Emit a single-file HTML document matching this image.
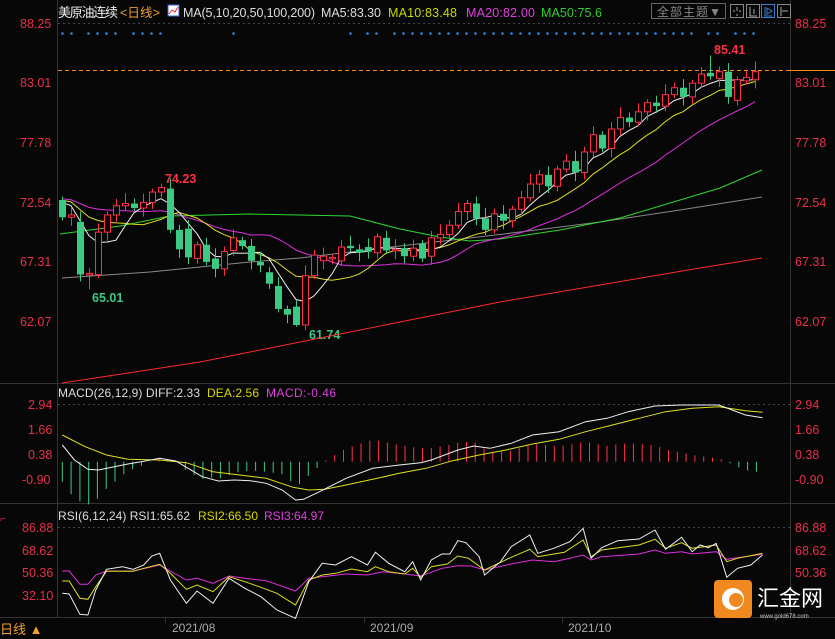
<!DOCTYPE html><html><head><meta charset="utf-8"><style>
body{margin:0;background:#070707;width:835px;height:639px;overflow:hidden;font-family:"Liberation Sans","Noto Sans CJK SC",sans-serif}
svg{position:absolute;left:0;top:0}
</style></head><body>
<svg id="s" width="835" height="639" xmlns="http://www.w3.org/2000/svg" font-family="Liberation Sans, Noto Sans CJK SC, sans-serif">
<rect width="835" height="639" fill="#070707"/>
<g stroke="#333" stroke-width="1">
<line x1="57.5" y1="0" x2="57.5" y2="617"/>
<line x1="790.5" y1="0" x2="790.5" y2="617"/>
<line x1="0" y1="383.5" x2="835" y2="383.5"/>
<line x1="0" y1="503.5" x2="835" y2="503.5"/>
<line x1="0" y1="617.5" x2="835" y2="617.5"/>
</g>
<g stroke="#444" stroke-dasharray="2,3"><line x1="58" y1="23.5" x2="790" y2="23.5"/><line x1="58" y1="404.5" x2="790" y2="404.5"/><line x1="58" y1="527.5" x2="790" y2="527.5"/></g>
<line x1="58" y1="70.5" x2="790" y2="70.5" stroke="#ff8c1a" stroke-dasharray="4,3"/>
<line x1="790" y1="70.5" x2="835" y2="70.5" stroke="#ff8c1a"/>
<g fill="#e8304a" font-size="12.5">
<text x="20" y="28">88.25</text><text x="20" y="87">83.01</text><text x="20" y="147">77.78</text><text x="20" y="207">72.54</text><text x="20" y="266">67.31</text><text x="20" y="326">62.07</text>
<text x="795" y="28">88.25</text><text x="795" y="87">83.01</text><text x="795" y="147">77.78</text><text x="795" y="207">72.54</text><text x="795" y="266">67.31</text><text x="795" y="326">62.07</text>
<text x="28" y="409">2.94</text><text x="28" y="434">1.66</text><text x="28" y="459">0.38</text><text x="22" y="484">-0.90</text>
<text x="795" y="409">2.94</text><text x="795" y="434">1.66</text><text x="795" y="459">0.38</text><text x="795" y="484">-0.90</text>
<text x="22" y="532">86.88</text><text x="22" y="555">68.62</text><text x="22" y="577">50.36</text><text x="22" y="600">32.10</text>
<text x="795" y="532">86.88</text><text x="795" y="555">68.62</text><text x="795" y="577">50.36</text>
</g>
<text x="58" y="17" fill="#eee" font-size="13" textLength="60">美原油连续</text>
<text x="120" y="17" fill="#f0a030" font-size="12.5" textLength="40">&lt;日线&gt;</text>
<rect x="168" y="5" width="11" height="11" fill="#fff" stroke="#36c"/><path d="M169 14l3-4 3 2 3-5" stroke="#e22" fill="none"/>
<text x="183" y="17" fill="#ddd" font-size="12.5" textLength="132">MA(5,10,20,50,100,200)</text>
<text x="321" y="17" fill="#ddd" font-size="12.5" textLength="60">MA5:83.30</text>
<text x="388" y="17" fill="#c8d800" font-size="12.5" textLength="69">MA10:83.48</text>
<text x="466" y="17" fill="#e040e0" font-size="12.5" textLength="69">MA20:82.00</text>
<text x="541" y="17" fill="#30d030" font-size="12.5" textLength="61">MA50:75.6</text>
<rect x="651.5" y="3.5" width="74" height="15" fill="none" stroke="#666"/>
<text x="657" y="16" fill="#888" font-size="12" textLength="64">全部主题▼</text>
<rect x="730.5" y="4.5" width="13" height="13" fill="none" stroke="#888"/>
<rect x="746.5" y="4.5" width="13" height="13" fill="none" stroke="#888"/>
<rect x="761.5" y="4.5" width="13" height="13" fill="none" stroke="#3a7fd5"/>
<rect x="777.5" y="4.5" width="13" height="13" fill="none" stroke="#888"/>
<path d="M737 7v4M737 14v2M733 11h2M739 11h2" stroke="#aaa"/><path d="M750 7v9h7M754 9v5" stroke="#aaa" fill="none"/><path d="M765 7v9h7M767 8l5 3-5 3z" stroke="#3a7fd5" fill="none"/><path d="M781 7v9M782 11h6" stroke="#aaa"/>
<text x="58" y="397" fill="#ddd" font-size="12" textLength="142">MACD(26,12,9) DIFF:2.33</text>
<text x="207" y="397" fill="#d8d800" font-size="12" textLength="52">DEA:2.56</text>
<text x="266" y="397" fill="#e040e0" font-size="12" textLength="70">MACD:-0.46</text>
<text x="58" y="520" fill="#ddd" font-size="12" textLength="132">RSI(6,12,24) RSI1:65.62</text>
<text x="198" y="520" fill="#d8d800" font-size="12" textLength="60">RSI2:66.50</text>
<text x="264" y="520" fill="#e040e0" font-size="12" textLength="60">RSI3:64.97</text>
<g fill="#aaa" font-size="12"><text x="172" y="632">2021/08</text><text x="370" y="632">2021/09</text><text x="568" y="632">2021/10</text></g>
<g stroke="#333"><line x1="165.5" y1="618" x2="165.5" y2="623"/><line x1="364.5" y1="618" x2="364.5" y2="623"/><line x1="562.5" y1="618" x2="562.5" y2="623"/></g>
<text x="0" y="634" fill="#f0a030" font-size="13">日线 ▲</text>
<text x="0" y="522" fill="#e8304a" font-size="10">⌐</text>
<text x="714" y="54" fill="#ff3040" font-size="12.5" font-weight="bold">85.41</text>
<text x="165" y="183" fill="#ff3040" font-size="12.5" font-weight="bold">74.23</text>
<text x="92" y="302" fill="#3cc983" font-size="12.5" font-weight="bold">65.01</text>
<text x="309" y="339" fill="#3cc983" font-size="12.5" font-weight="bold">61.74</text>
<g id="g"></g>
<rect x="714" y="580" width="38" height="38" rx="4" fill="#f08a20"/>
<circle cx="733" cy="599" r="11" fill="#fff"/><circle cx="736" cy="600" r="7" fill="#f08a20"/>
<text x="757" y="606" fill="#fff" font-size="22">汇金网</text>
<text x="760" y="618" fill="#ccc" font-size="6">www.gold678.com</text>
</svg>
<script>
var g=document.getElementById('g'),NS='http://www.w3.org/2000/svg';
function el(t,a){var e=document.createElementNS(NS,t);for(var k in a)e.setAttribute(k,a[k]);g.appendChild(e);return e}
function py(p){return 23+(88.25-p)*11.46}
var C=[[72.8,71.3],[71.3,71.5],[70.9,66.3],[66.3,66.4],[66.3,70],[70,71.5],[71.5,72.3],[72.3,72.5],[72.5,72.1],[72.1,72.6],[72.6,73.5],[73.5,73.9],[73.8,70.2],[70.2,68.5],[70.3,67.8],[67.7,68.9],[68.9,67.4],[67.7,66.8],[66.8,68.3],[68.4,69.5],[69.3,68.8],[68.8,67.5],[67.4,67.1],[66.5,65.5],[65.3,63.3],[63.3,62.8],[63.5,61.9],[61.9,66.2],[66.2,68],[67.5,67.9],[67.8,67.8],[67.5,68.7],[68.8,68.6],[68.5,68.2],[68.7,68.3],[68.2,69.6],[69.5,68.4],[68.4,68.5],[68.6,67.9],[67.9,68.6],[69,67.7],[67.9,69.5],[69.5,69.8],[69.8,70.6],[70.6,71.8],[71.8,72.5],[72.5,71.2],[71.2,70.2],[70.2,71.6],[71.6,71],[71,72],[72,73],[73,74.2],[74.2,75],[75,74],[74,75.5],[75.5,76.2],[76.2,75.2],[75.2,77],[77,78.5],[78.5,77.3],[77.3,79],[79,80],[80,79.6],[79.6,80.5],[80.5,81.3],[81.3,81],[81,82],[82,82.6],[82.6,81.8],[81.8,83],[83,83.8],[83.9,83.6],[83.4,84],[84,81.8],[81.5,83.3],[83.2,83.5],[83.3,84]];
var cl=[];for(var i=0;i<40;i++)cl.push(73.3-i*0.01);
C.forEach(function(c){cl.push(c[1])});
function ma(n,col){var pts=[];for(var i=0;i<C.length;i++){var j=i+40,s=0;for(var k=0;k<n;k++)s+=cl[j-k];pts.push((62+9*i)+','+py(s/n).toFixed(1))}el('polyline',{points:pts.join(' '),fill:'none',stroke:col,'stroke-width':1})}
el('polyline',{points:'62,383 200,362 300,342 400,322 500,302 600,285 700,268 762,258',fill:'none',stroke:'#ff2a2a'});
el('polyline',{points:'62,278 150,272 250,262 300,258 400,246 470,238 520,232 600,222 680,210 762,197',fill:'none',stroke:'#888'});
el('polyline',{points:'60,234 120,226 170,216 250,214 350,216 400,229 440,237 470,241 500,239 560,230 620,218 680,200 720,188 762,170',fill:'none',stroke:'#2ed82e'});
ma(20,'#e030e0');ma(10,'#e0e020');ma(5,'#f0f0f0');
C.forEach(function(c,i){var x=62+9*i,o=c[0],cc=c[1],up=cc>=o,hi=Math.max(o,cc)+0.3+((i*7)%5)*0.15,lo=Math.min(o,cc)-0.3-((i*3)%4)*0.15;
if(i==11)hi=74.23;if(i==3)lo=65.01;if(i==26)lo=61.74;if(i==72)hi=85.41;
var col=up?'#ff3048':'#3cc983';
el('line',{x1:x+.5,x2:x+.5,y1:py(hi),y2:py(lo),stroke:col});
var t=py(Math.max(o,cc)),b=py(Math.min(o,cc));if(b-t<1.5)b=t+1.5;
if(up)el('rect',{x:x-2.5,y:t,width:6,height:b-t,fill:'#070707',stroke:col});else el('rect',{x:x-3,y:t,width:7,height:b-t,fill:col});});
[62,71,88,97,106,115,133,142,151,160,233,350,367,376,394,403,412,421,430,439,448,457,466,475,484,493,502,511,520,529,538,547,556,565,574,583,592,601,610,619,628,637,646,655,664,673,682,691,708,717,735,744,753].forEach(function(x){el('circle',{cx:x+.5,cy:33.5,r:1.3,fill:'#2a8ae0'})});
var SX=1.878;
function P(a,ox,oy){return a.map(function(p){return (p[0]/SX+ox).toFixed(1)+','+(p[1]/3+oy).toFixed(1)}).join(' ')}
var dif=[[117,195],[140,240],[165,268],[185,270],[210,262],[240,252],[265,245],[300,235],[330,243],[350,262],[380,290],[410,303],[440,300],[470,302],[500,310],[530,330],[555,360],[570,358],[600,335],[650,295],[700,265],[750,255],[790,248],[810,240],[860,210],[890,198],[920,205],[960,190],[1000,165],[1050,155],[1100,125],[1140,115],[1180,95],[1230,78],[1280,75],[1350,75],[1400,105],[1432,113]];
var dea=[[117,165],[160,200],[200,225],[240,238],[300,240],[350,248],[400,275],[450,285],[500,295],[550,322],[580,330],[610,328],[650,315],[700,298],[750,280],[800,265],[850,242],[900,225],[950,210],[1000,192],[1050,178],[1100,155],[1150,135],[1200,115],[1250,95],[1300,85],[1350,80],[1400,92],[1432,97]];
function interp(a,x){for(var i=1;i<a.length;i++)if(a[i][0]>=x){var t=(x-a[i-1][0])/(a[i][0]-a[i-1][0]);return a[i-1][1]+t*(a[i][1]-a[i-1][1])}return a[a.length-1][1]}
for(var x=117;x<=1432;x+=16.5){var d=(interp(dea,x)-interp(dif,x))*2/3;var X=(x/SX).toFixed(1);el('line',{x1:X,x2:X,y1:461.7,y2:461.7-d,stroke:d>=0?'#ff3048':'#3cc983'})}
el('polyline',{points:P(dea,0,380),fill:'none',stroke:'#e0e020'});
el('polyline',{points:P(dif,0,380),fill:'none',stroke:'#f0f0f0'});
var r3=[[117,213],[130,213],[150,253],[165,253],[180,225],[200,213],[250,213],[300,195],[330,222],[350,240],[370,235],[400,250],[430,228],[460,235],[500,242],[555,273],[580,235],[605,230],[650,222],[690,225],[720,215],[760,222],[790,228],[830,205],[860,197],[885,198],[910,210],[960,192],[1000,180],[1040,185],[1070,175],[1095,165],[1110,180],[1130,170],[1200,162],[1230,150],[1250,160],[1280,155],[1300,162],[1345,155],[1365,178],[1385,173],[1432,163]];
var r2=[[117,243],[130,243],[150,295],[165,298],[180,260],[200,214],[250,214],[270,205],[300,193],[320,220],[350,268],[370,255],[400,275],[430,230],[460,245],[490,262],[520,280],[555,315],[580,240],[605,225],[630,220],[660,207],[690,215],[705,200],[730,215],[760,222],[775,205],[790,232],[810,200],[840,192],[860,168],[880,175],[910,210],[960,172],[995,148],[1010,170],[1060,157],[1095,120],[1110,170],[1130,150],[1200,135],[1230,118],[1250,145],[1280,128],[1300,145],[1345,135],[1365,185],[1385,175],[1432,160]];
var r1=[[117,280],[130,282],[150,343],[165,345],[180,270],[200,208],[230,200],[250,208],[270,195],[285,168],[300,160],[320,240],[350,310],[370,273],[400,310],[430,235],[460,265],[490,290],[520,330],[555,355],[580,245],[605,190],[630,195],[660,170],[690,195],[705,157],[730,190],[760,215],[775,185],[790,240],[810,180],[830,162],[845,162],[860,122],[875,128],[900,170],[910,225],[940,185],[960,140],[995,105],[1010,160],[1040,145],[1070,125],[1095,85],[1110,175],[1130,143],[1160,122],[1200,117],[1230,90],[1250,148],[1280,112],[1300,155],[1315,135],[1330,143],[1345,130],[1365,232],[1385,205],[1410,195],[1432,165]];
el('polyline',{points:P(r3,0,500),fill:'none',stroke:'#e030e0'});
el('polyline',{points:P(r2,0,500),fill:'none',stroke:'#e0e020'});
el('polyline',{points:P(r1,0,500),fill:'none',stroke:'#f0f0f0'});
</script>
</body></html>
